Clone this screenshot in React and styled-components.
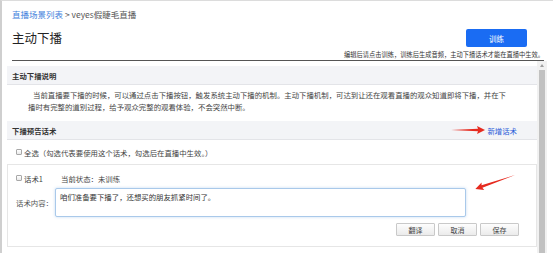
import styled, { createGlobalStyle } from "styled-components";

const Global = createGlobalStyle`
  html, body { margin: 0; padding: 0; background: #fff; }
  body { font-family: "Noto Sans CJK SC", "Noto Sans", sans-serif; color: #333; }
  * { box-sizing: border-box; }
`

const Frame = styled.div`
  position: relative;
  width: 553px;
  height: 253px;
  border-top: 1px solid #dcdcdc;
  border-left: 2px solid #cfcfcf;
  display: flex;
  flex-direction: column;
  overflow: hidden;
`

const Header = styled.header`
  margin: 0 9px 0 10px;
  padding-top: 7px;
  border-bottom: 1px solid #555;
`

const Crumbs = styled.div`
  font-size: 8.5px;
  line-height: 12px;
  color: #555;
  white-space: nowrap;
`

const CrumbLink = styled.a`
  color: #3f7fdc;
  text-decoration: none;
`

const TitleRow = styled.div`
  display: flex;
  align-items: center;
  justify-content: space-between;
  height: 18px;
  margin-top: 9px;
  padding-right: 17px;
`

const Title = styled.h1`
  margin: 0;
  font-size: 12.5px;
  font-weight: normal;
  color: #222;
  line-height: 18px;
`

const PrimaryButton = styled.button`
  width: 61px;
  height: 18px;
  border: none;
  border-radius: 2px;
  background: #1a6cf3;
  color: #fff;
  font-family: inherit;
  font-size: 7.5px;
  padding: 0;
`

const Hint = styled.div`
  margin-top: 3px;
  padding-bottom: 1px;
  text-align: right;
  font-size: 6.25px;
  line-height: 9px;
  color: #333;
  white-space: nowrap;
`

const Body = styled.div`
  flex: 1;
  min-height: 0;
  display: flex;
  margin-left: 5px;
  width: 540px;
`

const Content = styled.div`
  width: 530px;
  overflow: hidden;
`

const Rail = styled.div`
  width: 10px;
  display: flex;
  flex-direction: column;
  background: #f1f1f1;
  padding: 0 2px;
`

const RailArrow = styled.div`
  height: 9px;
  display: flex;
  align-items: center;
  justify-content: center;

  &::before {
    content: "";
    border: 2.5px solid transparent;
    border-top-width: 0;
    border-bottom: 3px solid #a0a0a0;
  }
`

const Thumb = styled.div`
  flex: 1;
  background: #c1c1c1;
`

const Band = styled.div`
  display: flex;
  align-items: center;
  justify-content: space-between;
  height: 19px;
  margin-top: ${p => p.$top || 0}px;
  padding: 0 20px 0 5px;
  background: #f3f4f7;
  border-bottom: 1px solid #e3e4e8;
  font-size: 7.4px;
  font-weight: bold;
  color: #333;
`

const AddLink = styled.a`
  color: #2a5bd7;
  font-weight: normal;
  text-decoration: none;
`

const Desc = styled.p`
  margin: 0;
  padding: 4px 26px 8px 21px;
  text-indent: 5px;
  font-size: 7.4px;
  line-height: 12px;
  color: #444;
`

const CheckRow = styled.label`
  display: flex;
  align-items: center;
  height: ${p => p.$h || 12}px;
  padding-left: ${p => p.$pad || 0}px;
  font-size: 7.4px;
  color: #444;
  white-space: nowrap;
`

const Box = styled.input.attrs({ type: "checkbox" })`
  appearance: none;
  width: 6px;
  height: 6px;
  margin: 0 2px 0 0;
  border: 1px solid #a8a8a8;
  border-radius: 1px;
  background: linear-gradient(#fff, #e9e9e9);
`

const Card = styled.div`
  border: 1px solid #e6e6e6;
  padding: 7px 0 10px 8px;
`

const ItemName = styled.span`
  width: 37px;
`

const Status = styled.span`
  color: #444;
`

const ContentRow = styled.div`
  display: flex;
  align-items: center;
  margin-top: 4px;
`

const FieldLabel = styled.span`
  width: 39px;
  font-size: 7.4px;
  color: #555;
  white-space: nowrap;
`

const Speech = styled.textarea`
  width: 411px;
  height: 29px;
  padding: 2px 4px;
  border: 1px solid #a9c9ea;
  border-radius: 2px;
  box-shadow: 0 0 3px rgba(120, 170, 225, 0.45);
  resize: none;
  outline: none;
  font-family: inherit;
  font-size: 7.4px;
  line-height: 11px;
  color: #333;
`

const Actions = styled.div`
  display: flex;
  justify-content: flex-end;
  gap: 3px;
  margin-top: 6px;
  padding-right: 17px;
`

const GhostButton = styled.button`
  width: 39px;
  height: 13px;
  padding: 0;
  border: 1px solid #c9c9c9;
  border-radius: 1px;
  background: linear-gradient(#fdfdfd, #ebebeb);
  font-family: inherit;
  font-size: 7px;
  color: #444;
`

const ArrowSvg = styled.svg`
  position: absolute;
  left: ${p => p.$x}px;
  top: ${p => p.$y - 5}px;
  transform-origin: 0 50%;
  transform: rotate(${p => p.$angle}deg);
  overflow: visible;
`

function Arrow({ x, y, len, angle }) {
  const h = len - 8;
  const pts = `0,5 ${h + 1},3.7 ${h},1 ${len},5 ${h},9 ${h + 1},6.3`;
  return (
    <ArrowSvg $x={x} $y={y} $angle={angle} width={len} height={10} viewBox={`0 0 ${len} 10`}>
      <polygon points={pts} fill="#e62a1f" />
    </ArrowSvg>
  );
}

export default function App() {
  return (
    <>
      <Global />
      <Frame>
        <Header>
          <Crumbs>
            <CrumbLink href="#">直播场景列表</CrumbLink> &gt; veyes假睫毛直播
          </Crumbs>
          <TitleRow>
            <Title>主动下播</Title>
            <PrimaryButton>训练</PrimaryButton>
          </TitleRow>
          <Hint>编辑后请点击训练，训练后生成音频，主动下播话术才能在直播中生效。</Hint>
        </Header>

        <Body>
          <Content>
            <Band $top={5}>主动下播说明</Band>
            <Desc>
              当前直播要下播的时候，可以通过点击下播按钮，触发系统主动下播的机制。主动下播机制，可达到让还在观看直播的观众知道即将下播，并在下播时有完整的道别过程，给予观众完整的观看体验，不会突然中断。
            </Desc>

            <Band>
              下播预告话术
              <AddLink href="#">新增话术</AddLink>
            </Band>
            <CheckRow $h={24} $pad={9}>
              <Box />
              全选（勾选代表要使用这个话术，勾选后在直播中生效。）
            </CheckRow>

            <Card>
              <CheckRow>
                <Box />
                <ItemName>话术1</ItemName>
                <Status>当前状态：未训练</Status>
              </CheckRow>
              <ContentRow>
                <FieldLabel>话术内容：</FieldLabel>
                <Speech defaultValue="咱们准备要下播了，还想买的朋友抓紧时间了。" />
              </ContentRow>
              <Actions>
                <GhostButton>翻译</GhostButton>
                <GhostButton>取消</GhostButton>
                <GhostButton>保存</GhostButton>
              </Actions>
            </Card>
          </Content>
          <Rail>
            <RailArrow />
            <Thumb />
          </Rail>
        </Body>

        <Arrow x={449} y={129} len={34} angle={0} />
        <Arrow x={513} y={174} len={42} angle={160.7} />
      </Frame>
    </>
  );
}
